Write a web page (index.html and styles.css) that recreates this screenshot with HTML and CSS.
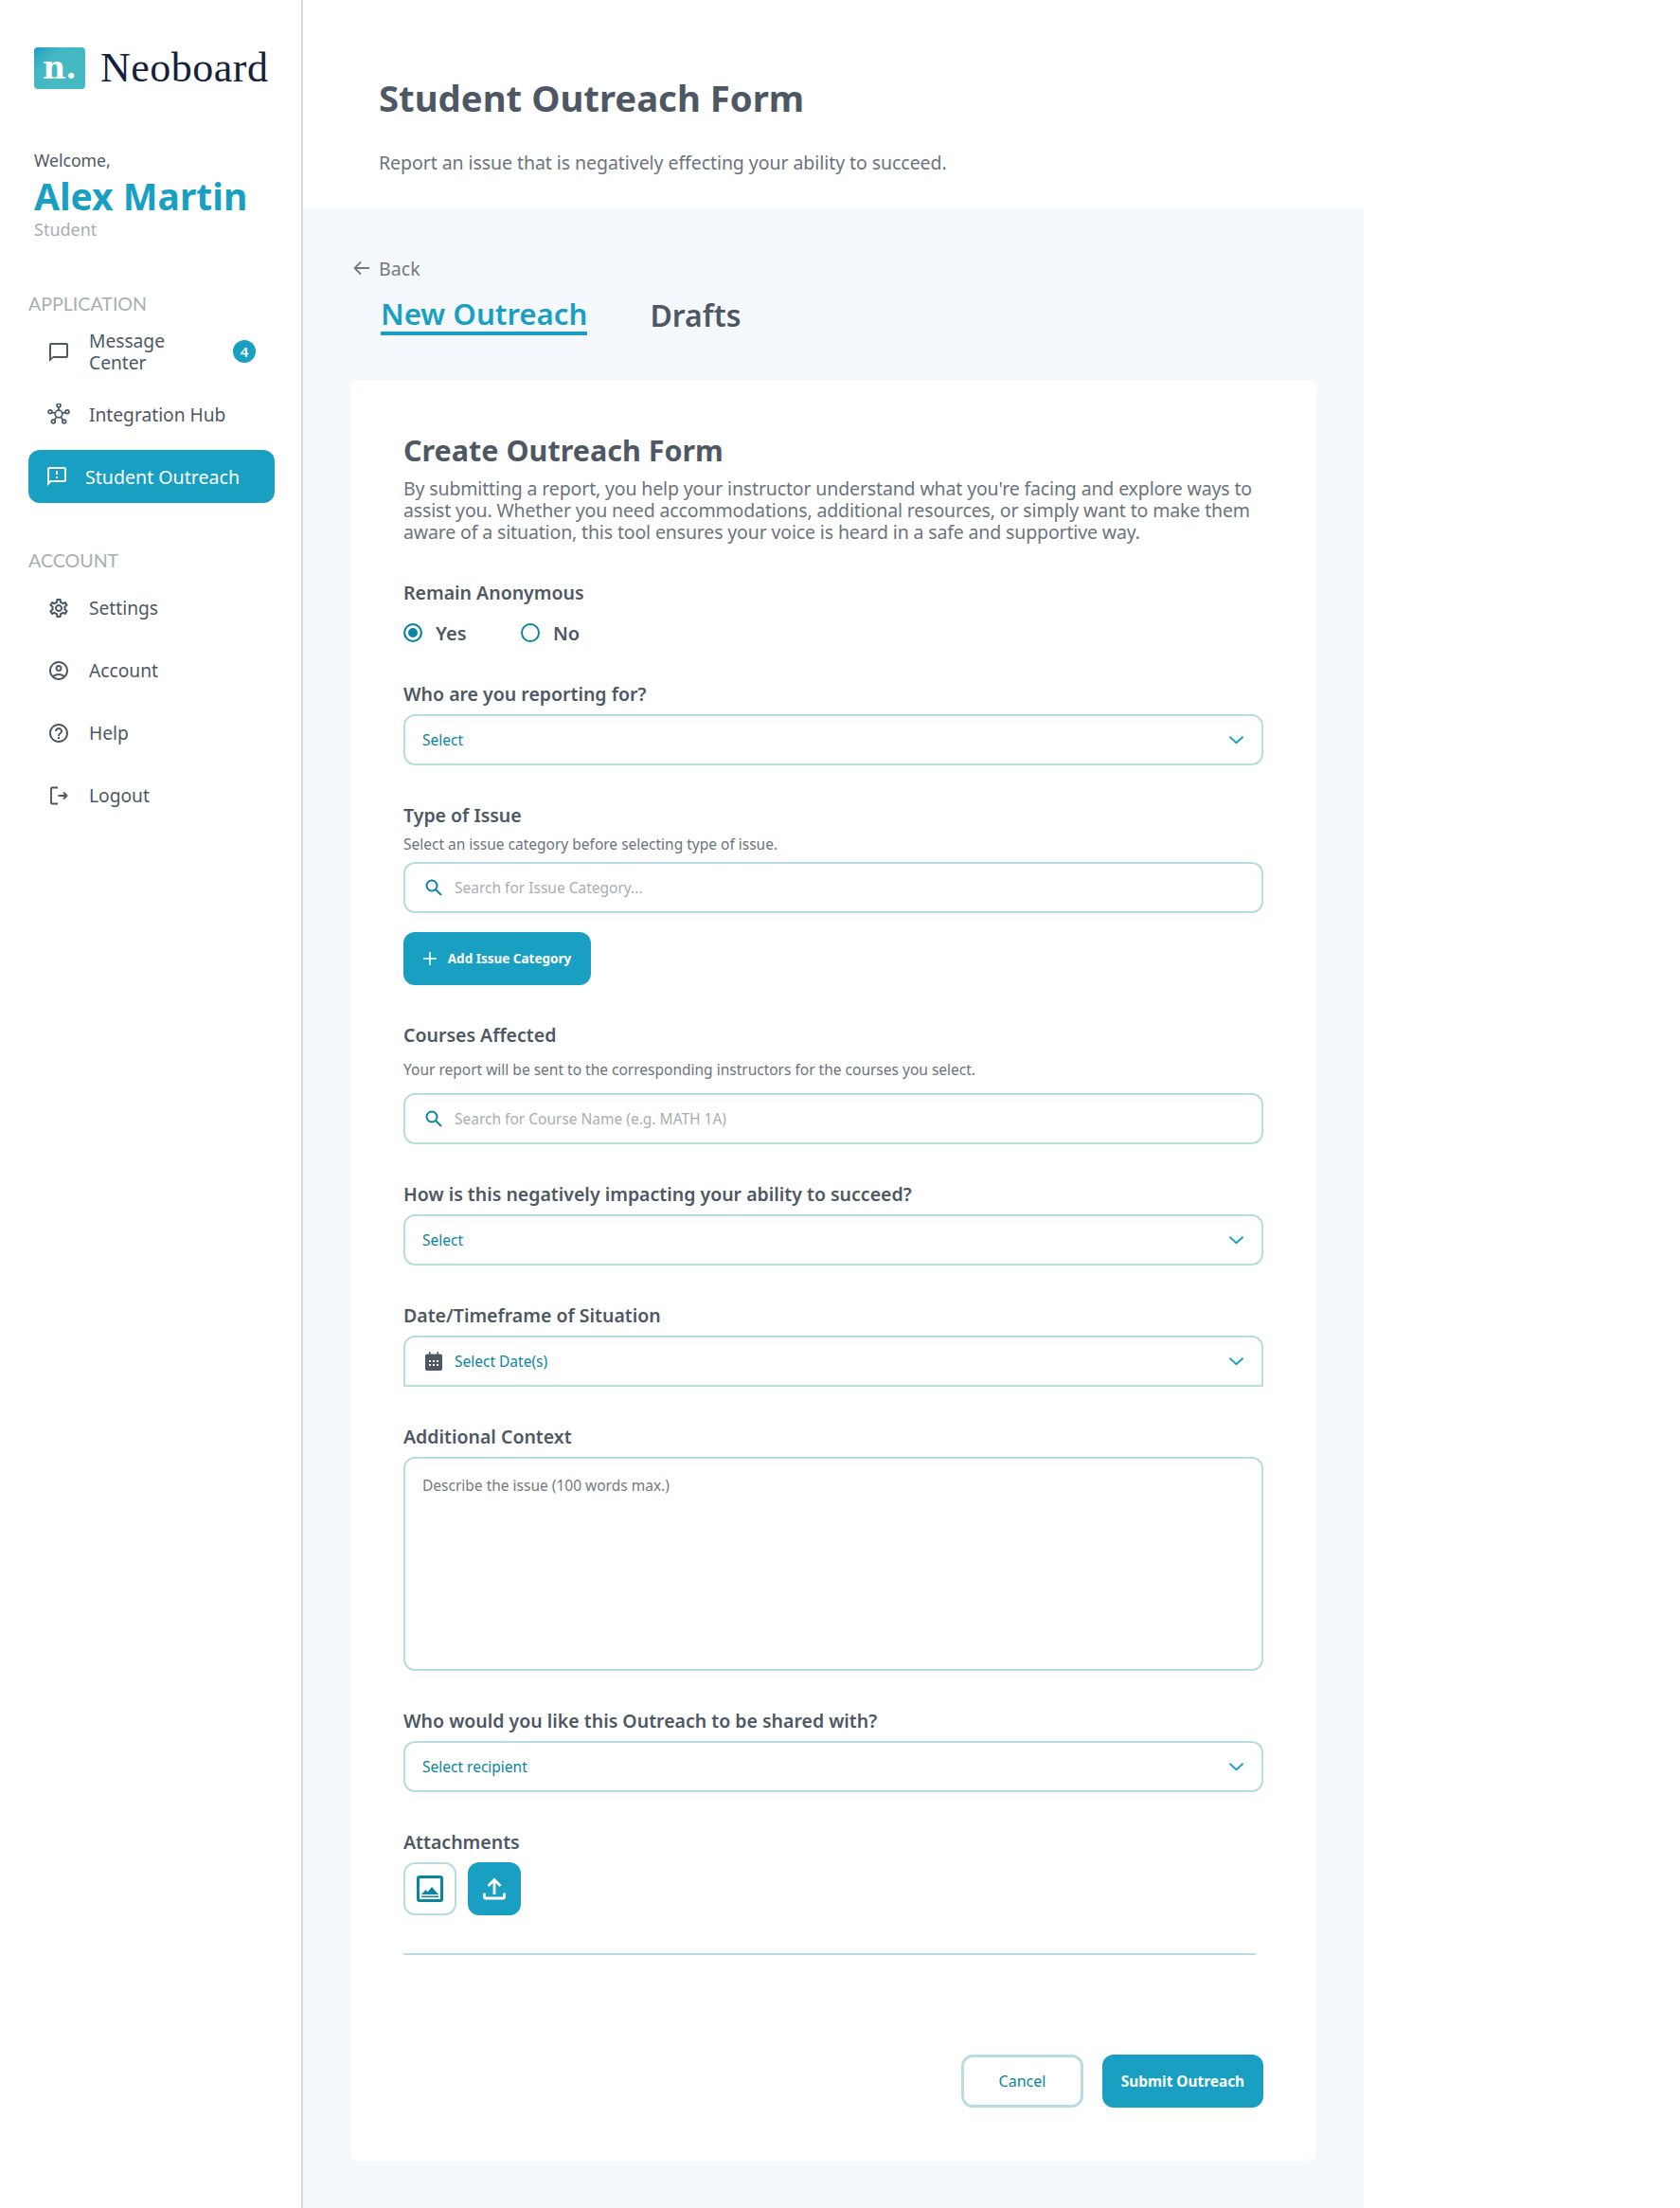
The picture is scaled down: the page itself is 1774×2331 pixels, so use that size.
FILE: index.html
```html
<!DOCTYPE html>
<html lang="en">
<head>
<meta charset="utf-8">
<title>Student Outreach Form</title>
<link rel="stylesheet" href="styles.css">
</head>
<body>
<div class="app">
  <aside class="sidebar">
    <div class="brand">
      <div class="logo"><span>n.</span></div>
      <div class="wordmark">Neoboard</div>
    </div>
    <div class="welcome">Welcome,</div>
    <div class="user">Alex Martin</div>
    <div class="role">Student</div>

    <div class="nav-head">APPLICATION</div>
    <a class="nav-item">
      <svg class="ico" viewBox="0 0 24 24"><path d="M20 2H4c-1.1 0-2 .9-2 2v18l4-4h14c1.1 0 2-.9 2-2V4c0-1.1-.9-2-2-2zm0 14H6l-2 2V4h16v12z"/></svg>
      <span class="nav-text narrow">Message Center</span>
      <span class="badge">4</span>
    </a>
    <a class="nav-item">
      <svg class="ico line" viewBox="0 0 24 24"><circle cx="12" cy="11" r="3.800"/><circle cx="12" cy="2" r="1.900"/><circle cx="3" cy="8.800" r="1.900"/><circle cx="21" cy="8.800" r="1.900"/><circle cx="6.300" cy="19.100" r="1.900"/><circle cx="17.700" cy="19.100" r="1.900"/><path d="M12 3.900v3.300M4.900 9.300l3.500.8M19.100 9.300l-3.500.8M7.400 17.500l2.300-3.300M16.600 17.500l-2.300-3.300"/></svg>
      <span class="nav-text">Integration Hub</span>
    </a>
    <a class="nav-item active">
      <svg class="ico" viewBox="0 0 24 24"><path d="M20 2H4c-1.1 0-1.99.9-1.99 2L2 22l4-4h14c1.1 0 2-.9 2-2V4c0-1.1-.9-2-2-2zm0 14H5.17L4 17.17V4h16v12zM11 12h2v2h-2zm0-6h2v4h-2z"/></svg>
      <span class="nav-text">Student Outreach</span>
    </a>

    <div class="nav-head second">ACCOUNT</div>
    <a class="nav-item">
      <svg class="ico" viewBox="0 0 24 24"><path d="M19.43 12.98c.04-.32.07-.64.07-.98 0-.34-.03-.66-.07-.98l2.11-1.65c.19-.15.24-.42.12-.64l-2-3.46c-.09-.16-.26-.25-.44-.25-.06 0-.12.01-.17.03l-2.49 1c-.52-.4-1.08-.73-1.69-.98l-.38-2.65C14.46 2.18 14.25 2 14 2h-4c-.25 0-.46.18-.49.42l-.38 2.65c-.61.25-1.17.59-1.69.98l-2.49-1c-.06-.02-.12-.03-.18-.03-.17 0-.34.09-.43.25l-2 3.46c-.13.22-.07.49.12.64l2.11 1.65c-.04.32-.07.65-.07.98 0 .33.03.66.07.98l-2.11 1.65c-.19.15-.24.42-.12.64l2 3.46c.09.16.26.25.44.25.06 0 .12-.01.17-.03l2.49-1c.52.4 1.08.73 1.69.98l.38 2.65c.03.24.24.42.49.42h4c.25 0 .46-.18.49-.42l.38-2.65c.61-.25 1.17-.59 1.69-.98l2.49 1c.06.02.12.03.18.03.17 0 .34-.09.43-.25l2-3.46c.12-.22.07-.49-.12-.64l-2.11-1.65zm-1.98-1.71c.04.31.05.52.05.73 0 .21-.02.43-.05.73l-.14 1.13.89.7 1.08.84-.7 1.21-1.27-.51-1.04-.42-.9.68c-.43.32-.84.56-1.25.73l-1.06.43-.16 1.13-.2 1.35h-1.4l-.19-1.35-.16-1.13-1.06-.43c-.43-.18-.83-.41-1.23-.71l-.91-.7-1.06.43-1.27.51-.7-1.21 1.08-.84.89-.7-.14-1.13c-.03-.31-.05-.54-.05-.74s.02-.43.05-.73l.14-1.13-.89-.7-1.08-.84.7-1.21 1.27.51 1.04.42.9-.68c.43-.32.84-.56 1.25-.73l1.06-.43.16-1.13.2-1.35h1.39l.19 1.35.16 1.13 1.06.43c.43.18.83.41 1.23.71l.91.7 1.06-.43 1.27-.51.7 1.21-1.07.85-.89.7.14 1.13zM12 8c-2.21 0-4 1.79-4 4s1.79 4 4 4 4-1.79 4-4-1.79-4-4-4zm0 6c-1.1 0-2-.9-2-2s.9-2 2-2 2 .9 2 2-.9 2-2 2z"/></svg>
      <span class="nav-text">Settings</span>
    </a>
    <a class="nav-item">
      <svg class="ico" viewBox="0 0 24 24"><path d="M12 2C6.48 2 2 6.48 2 12s4.48 10 10 10 10-4.48 10-10S17.52 2 12 2zM7.35 18.5C8.66 17.56 10.26 17 12 17s3.34.56 4.65 1.5c-1.31.94-2.91 1.5-4.65 1.5s-3.34-.56-4.65-1.5zm10.79-1.38C16.45 15.8 14.32 15 12 15s-4.45.8-6.14 2.12C4.7 15.73 4 13.95 4 12c0-4.42 3.58-8 8-8s8 3.58 8 8c0 1.95-.7 3.73-1.86 5.12zM12 6c-1.93 0-3.5 1.57-3.5 3.5S10.07 13 12 13s3.5-1.57 3.5-3.5S13.93 6 12 6zm0 5c-.83 0-1.5-.67-1.5-1.5S11.17 8 12 8s1.5.67 1.5 1.5S12.83 11 12 11z"/></svg>
      <span class="nav-text">Account</span>
    </a>
    <a class="nav-item">
      <svg class="ico" viewBox="0 0 24 24"><path d="M11 18h2v-2h-2v2zm1-16C6.48 2 2 6.48 2 12s4.48 10 10 10 10-4.48 10-10S17.52 2 12 2zm0 18c-4.41 0-8-3.59-8-8s3.59-8 8-8 8 3.59 8 8-3.59 8-8 8zm0-14c-2.21 0-4 1.79-4 4h2c0-1.1.9-2 2-2s2 .9 2 2c0 2-3 1.75-3 5h2c0-2.25 3-2.5 3-5 0-2.21-1.79-4-4-4z"/></svg>
      <span class="nav-text">Help</span>
    </a>
    <a class="nav-item">
      <svg class="ico line thick" viewBox="0 0 24 24"><path d="M11 3.500H5a1 1 0 0 0-1 1v15a1 1 0 0 0 1 1h6M11.500 12H20.500M17 8.500l3.500 3.500-3.500 3.500"/></svg>
      <span class="nav-text">Logout</span>
    </a>
  </aside>

  <main class="main">
    <header class="page-head">
      <h1 class="page-title">Student Outreach Form</h1>
      <p class="page-sub">Report an issue that is negatively effecting your ability to succeed.</p>
    </header>

    <section class="panel">
      <a class="back">
        <svg class="back-ico" viewBox="0 0 18 18"><path d="M17 9H1.500M8 2.500L1.500 9 8 15.500"/></svg>
        <span>Back</span>
      </a>
      <nav class="tabs">
        <a class="tab current">New Outreach</a>
        <a class="tab">Drafts</a>
      </nav>

      <form class="card">
        <h2 class="card-title">Create Outreach Form</h2>
        <p class="intro">By submitting a report, you help your instructor understand what you're facing and explore ways to<br>assist you. Whether you need accommodations, additional resources, or simply want to make them<br>aware of a situation, this tool ensures your voice is heard in a safe and supportive way.</p>

        <div class="label first">Remain Anonymous</div>
        <div class="radios">
          <span class="radio on"><i class="dot"></i>Yes</span>
          <span class="radio"><i class="dot"></i>No</span>
        </div>

        <div class="label after-radio">Who are you reporting for?</div>
        <div class="control select">
          <span class="value">Select</span>
          <svg class="chev" viewBox="0 0 18 10"><path d="M1.500 1.500L9 8.500l7.500-7"/></svg>
        </div>

        <div class="label">Type of Issue</div>
        <div class="hint">Select an issue category before selecting type of issue.</div>
        <div class="control search">
          <svg class="search-ico" viewBox="0 0 18 18"><circle cx="7" cy="7" r="5.500"/><path d="M11 11l6 6"/></svg>
          <span class="placeholder">Search for Issue Category...</span>
        </div>
        <button class="btn add" type="button">
          <svg class="plus" viewBox="0 0 14 14"><path d="M7 0v14M0 7h14"/></svg>Add Issue Category
        </button>

        <div class="label">Courses Affected</div>
        <div class="hint loose">Your report will be sent to the corresponding instructors for the courses you select.</div>
        <div class="control search">
          <svg class="search-ico" viewBox="0 0 18 18"><circle cx="7" cy="7" r="5.500"/><path d="M11 11l6 6"/></svg>
          <span class="placeholder">Search for Course Name (e.g. MATH 1A)</span>
        </div>

        <div class="label">How is this negatively impacting your ability to succeed?</div>
        <div class="control select">
          <span class="value">Select</span>
          <svg class="chev" viewBox="0 0 18 10"><path d="M1.500 1.500L9 8.500l7.500-7"/></svg>
        </div>

        <div class="label">Date/Timeframe of Situation</div>
        <div class="control select date">
          <svg class="cal" viewBox="0 0 18 20"><path class="cal-body" fill-rule="evenodd" d="M2 2.500h2V0h1.500v2.500h7V0H14v2.500h2a2 2 0 0 1 2 2V18a2 2 0 0 1-2 2H2a2 2 0 0 1-2-2V4.500a2 2 0 0 1 2-2zM4 9v2h2V9zm4 0v2h2V9zm4 0v2h2V9zm-8 4v2h2v-2zm4 0v2h2v-2zm4 0v2h2v-2z"/></svg>
          <span class="value with-ico">Select Date(s)</span>
          <svg class="chev" viewBox="0 0 18 10"><path d="M1.500 1.500L9 8.500l7.500-7"/></svg>
        </div>

        <div class="label">Additional Context</div>
        <div class="control area"><span class="area-text">Describe the issue (100 words max.)</span></div>

        <div class="label">Who would you like this Outreach to be shared with?</div>
        <div class="control select">
          <span class="value">Select recipient</span>
          <svg class="chev" viewBox="0 0 18 10"><path d="M1.500 1.500L9 8.500l7.500-7"/></svg>
        </div>

        <div class="label">Attachments</div>
        <div class="attach">
          <div class="attach-btn outline">
            <svg class="attach-ico" viewBox="0 0 28 28"><path fill-rule="evenodd" d="M3 0h22a3 3 0 0 1 3 3v22a3 3 0 0 1-3 3H3a3 3 0 0 1-3-3V3a3 3 0 0 1 3-3zm0 3v22h22V3zM5 20l4.500-5 2 2.500L16 12l7 8zM5 21.500h18V23H5z"/></svg>
          </div>
          <div class="attach-btn filled">
            <svg class="upload-ico" viewBox="0 0 24 24"><path d="M12 18V2.500M5.500 9L12 2.500 18.500 9M1.500 16.500V20.500A1.500 1.500 0 0 0 3 22h18a1.500 1.500 0 0 0 1.500-1.500V16.500"/></svg>
          </div>
        </div>
        <div class="rule"></div>
        <div class="actions">
          <button class="btn cancel" type="button">Cancel</button>
          <button class="btn submit" type="button">Submit Outreach</button>
        </div>
      </form>
    </section>
  </main>
</div>
</body>
</html>
```
FILE: styles.css
```css
* { box-sizing: border-box; }
html, body { margin: 0; padding: 0; background: #fff; }
body { font-family: "Noto Sans", "Open Sans", sans-serif; color: #4d5864; }
.app { display: flex; min-height: 2331px; }

.sidebar { width: 320px; flex: none; border-right: 2px solid #d6d9e0; padding: 50px 28px 0 30px; }
.brand { display: flex; align-items: center; margin-left: 6px; height: 44px; }
.logo { width: 54px; height: 44px; border-radius: 4px; background: linear-gradient(135deg, #1d9fc2 0%, #43b8c4 30%, #47bac4 100%); display: flex; align-items: center; justify-content: center; }
.logo span { font-family: "DejaVu Serif", serif; font-weight: 700; font-size: 33px; line-height: 34px; color: #fff; }
.wordmark { font-family: "Liberation Serif", serif; font-size: 44px; line-height: 44px; letter-spacing: .5px; color: #14233a; margin-left: 16px; }
.welcome { margin: 63px 0 0 6px; font-size: 17.600px; line-height: 24px; color: #4d5864; }
.user { margin: 2px 0 0 6px; font-size: 39px; line-height: 48px; font-weight: 700; color: #189fc2; white-space: nowrap; }
.role { margin-left: 6px; font-size: 18px; line-height: 22px; color: #a9adb3; }
.nav-head { margin-top: 53px; margin-bottom: 3px; height: 30px; line-height: 30px; font-family: Lato, sans-serif; font-size: 19.600px; color: #a9adb3; }
.nav-head.second { margin-top: 46px; margin-bottom: 2px; }
.nav-item { display: flex; align-items: center; height: 66px; padding-left: 20px; color: #4d5864; position: relative; }
.ico { width: 24px; height: 24px; flex: none; fill: #4d5864; }
.ico.line { fill: none; stroke: #4d5864; stroke-width: 1.700; }
.ico.thick { stroke-width: 1.900; }
.nav-text { margin-left: 20px; padding-bottom: 2px; font-size: 19.200px; line-height: 23px; white-space: nowrap; }
.nav-text.narrow { white-space: normal; width: 110px; }
.badge { position: absolute; left: 216px; top: 20px; width: 24px; height: 24px; border-radius: 50%; background: #189fc2; color: #fff; font-size: 15px; font-weight: 600; line-height: 24px; text-align: center; }
.nav-item.active { height: 56px; margin-top: 4px; padding-left: 18px; border-radius: 12px; background: #189fc2; color: #fff; }
.nav-item.active .ico { fill: #fff; }
.nav-item.active .nav-text { margin-left: 18px; padding-bottom: 0; font-size: 19.600px; }

.main { width: 1120px; flex: none; display: flex; flex-direction: column; }
.page-head { height: 221px; padding: 0 0 0 80px; }
.page-title { margin: 0; padding-top: 79px; font-size: 38.300px; line-height: 48px; font-weight: 700; color: #4d5864; }
.page-sub { margin: 33px 0 0; font-size: 19.500px; letter-spacing: -.06px; line-height: 24px; color: #6b747d; }
.panel { flex: 1; background: #f5f8fd; padding: 50px 50px 50px; }
.back { display: flex; align-items: center; height: 24px; font-size: 19.600px; color: #75797e; }
.back-ico { width: 18px; height: 18px; margin: 0 9px 0 3px; fill: none; stroke: #75797e; stroke-width: 1.800; }
.tabs { display: flex; margin: 20px 0 0 32px; height: 39px; }
.tab { font-size: 32px; line-height: 36px; font-weight: 600; color: #4d5864; height: 39px; margin-right: 66px; }
.tab.current { font-size: 31.200px; line-height: 33px; color: #189fc2; border-bottom: 4px solid #189fc2; }

.card { background: #fff; border-radius: 8px; margin-top: 47px; padding: 55px 56px 56px; }
.card-title { margin: 0; font-size: 30.500px; line-height: 39px; font-weight: 700; color: #4d5864; }
.intro { margin: 9px 0 0; font-size: 19.500px; letter-spacing: -.14px; line-height: 23px; color: #6b747d; white-space: nowrap; }
.label { margin-top: 41px; font-size: 19.500px; line-height: 24px; font-weight: 600; color: #4d5864; }
.label.after-radio { margin-top: 38px; }
.radios { display: flex; height: 30px; margin-top: 15px; align-items: center; font-size: 20px; font-weight: 600; }
.radio { display: flex; align-items: center; width: 124px; }
.dot { width: 20px; height: 20px; border-radius: 50%; border: 2px solid #0a84a0; margin-right: 14px; flex: none; background: #fff; }
.radio.on .dot { background: #0a84a0; box-shadow: inset 0 0 0 3px #fff; }
.hint { margin-top: 6px; margin-bottom: -2px; font-size: 15.500px; line-height: 24px; color: #6b747d; }
.hint.loose { margin-top: 12px; margin-bottom: 13px; }
.control { display: flex; align-items: center; height: 54px; margin-top: 9px; border: 2px solid #b9dbe2; border-radius: 12px; padding: 0 18px; background: #fff; font-size: 15.500px; width: 908px; }
.value { color: #0a84a0; }
.value.with-ico { margin-left: 13px; }
.placeholder { margin-left: 13px; color: #a9adb3; }
.chev { width: 17px; height: 10px; margin-left: auto; fill: none; stroke: #189fc2; stroke-width: 2; }
.search-ico { width: 18px; height: 18px; flex: none; margin-left: 3px; fill: none; stroke: #0a84a0; stroke-width: 2; }
.cal { width: 18px; height: 20px; flex: none; margin-left: 3px; }
.cal-body { fill: #4d5864; }
.date { border-radius: 12px 12px 0 0; }
.area { align-items: flex-start; height: 226px; }
.area-text { margin-top: 17px; color: #75797e; }
.btn { border: 0; font-family: inherit; display: inline-flex; align-items: center; justify-content: center; }
.add { margin-top: 20px; width: 198px; height: 56px; border-radius: 12px; background: #189fc2; color: #fff; font-size: 13.500px; font-weight: 700; }
.plus { width: 14px; height: 14px; margin-right: 12px; fill: none; stroke: #fff; stroke-width: 1.600; }
.attach { display: flex; gap: 12px; margin-top: 9px; }
.attach-btn { width: 56px; height: 56px; border-radius: 12px; display: flex; align-items: center; justify-content: center; }
.attach-btn.outline { border: 2px solid #b9dbe2; }
.attach-btn.filled { background: #189fc2; }
.attach-ico { width: 28px; height: 28px; fill: #0a84a0; }
.upload-ico { width: 24px; height: 24px; fill: none; stroke: #fff; stroke-width: 2.800; }
.rule { margin-top: 40px; height: 2px; width: 900px; background: #b9dbe2; }
.actions { display: flex; justify-content: flex-end; gap: 20px; margin-top: 105px; width: 908px; }
.cancel { width: 129px; height: 56px; border: 3px solid #b9dbe2; border-radius: 12px; background: #fff; color: #0a84a0; font-size: 16px; }
.submit { width: 170px; height: 56px; border-radius: 12px; background: #189fc2; color: #fff; font-size: 15.400px; font-weight: 700; }
```
